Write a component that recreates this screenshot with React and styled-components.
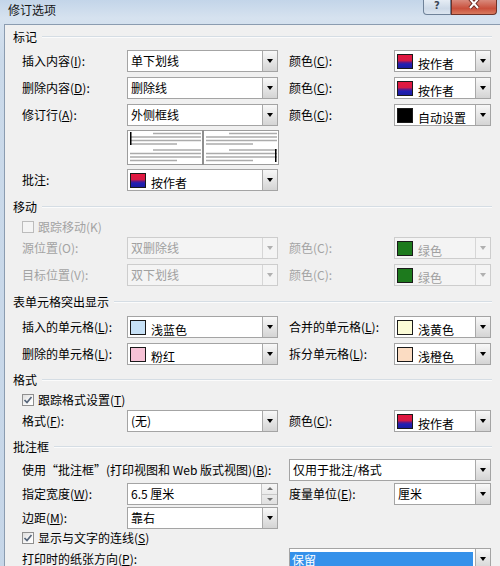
import React from "react";
import styled, { createGlobalStyle } from "styled-components";

const GlobalStyle = createGlobalStyle`
  html, body {
    margin: 0;
    padding: 0;
    width: 500px;
    height: 566px;
    overflow: hidden;
    background: #f0f0f0;
  }
  body {
    font-family: "Noto Sans CJK SC", "Noto Sans", sans-serif;
    font-size: 12px;
    color: #000;
  }
`;

const Window = styled.div`
  width: 506px;
  height: 600px;
  box-sizing: border-box;
  padding: 0 4px;
  display: flex;
  flex-direction: column;
  background: linear-gradient(180deg, #c3d5e9 0%, #d6e2ef 18px, #cbdaea 60px, #c6d6e8 100%);
`;

const TitleBar = styled.div`
  height: 24px;
  flex: none;
  display: flex;
  align-items: flex-start;
  padding: 0 5px 0 4px;
`;

const Title = styled.div`
  padding-top: 3px;
  line-height: 14px;
  color: #151515;
`;

const Controls = styled.div`
  margin-left: auto;
  display: flex;
`;

const CaptionButton = styled.div`
  width: ${(p) => p.$w}px;
  height: 15px;
  box-sizing: border-box;
  border: 1px solid ${(p) => (p.$close ? "#6e3228" : "#6f8299")};
  border-top: none;
  border-radius: ${(p) => (p.$close ? "0 0 4px 0" : "0 0 0 4px")};
  background: ${(p) =>
    p.$close
      ? "linear-gradient(180deg, #d98a7c 0%, #c9503c 60%, #d77a5e 100%)"
      : "linear-gradient(180deg, #e6edf5 0%, #cdd9e7 60%, #dbe5f0 100%)"};
  display: flex;
  justify-content: center;
  align-items: flex-start;
`;

const HelpGlyph = styled.span`
  font-family: "DejaVu Sans", sans-serif;
  font-size: 10px;
  font-weight: bold;
  line-height: 12px;
  color: #3a4656;
`;

const Client = styled.div`
  flex: 1;
  background: #f0f0f0;
  border: 1px solid #8b9cb0;
  padding: 3px 9px 0 8px;
  display: flex;
  flex-direction: column;
`;

const Header = styled.div`
  display: flex;
  align-items: center;
  gap: 5px;
  height: 18px;
  flex: none;
  line-height: 14px;
  margin-top: ${(p) => p.$mt ?? 0}px;
  &::after {
    content: "";
    flex: 1;
    height: 1px;
    background: #d5dde4;
    border-bottom: 1px solid #fbfbfb;
  }
`;

const Row = styled.div`
  display: grid;
  grid-template-columns: ${(p) => (p.$wide ? "267px 202px" : "105px 151px 116px 97px")};
  align-items: center;
  height: 22px;
  flex: none;
  padding-left: 9px;
  margin-top: ${(p) => p.$mt ?? 5}px;
`;

const Label = styled.span`
  white-space: nowrap;
  line-height: 14px;
  color: ${(p) => (p.$disabled ? "#a3a3a3" : "#000")};
  padding-left: ${(p) => (p.$right ? 11 : 0)}px;
`;

const CheckRow = styled.label`
  display: flex;
  align-items: center;
  gap: 4px;
  height: 18px;
  flex: none;
  padding-left: 9px;
  margin-top: ${(p) => p.$mt ?? 0}px;
  line-height: 14px;
  color: ${(p) => (p.$disabled ? "#a3a3a3" : "#000")};
`;

const CheckText = styled.span`
  white-space: nowrap;
`;

const Box = styled.span`
  width: 12px;
  height: 12px;
  box-sizing: border-box;
  border: 1px solid ${(p) => (p.$disabled ? "#bcbcbc" : "#8f8f8f")};
  background: ${(p) =>
    p.$disabled ? "#f4f4f4" : "linear-gradient(135deg, #dedede 0%, #f7f7f7 60%, #ffffff 100%)"};
  display: flex;
  align-items: center;
  justify-content: center;
`;

const Combo = styled.div`
  height: 22px;
  box-sizing: border-box;
  display: flex;
  border: 1px solid ${(p) => (p.$disabled ? "#cdcdcd" : "#a4a4a4")};
  background: ${(p) => (p.$disabled ? "#f4f4f4" : "#fff")};
  color: ${(p) => (p.$disabled ? "#a0a0a0" : "#000")};
  overflow: hidden;
`;

const Field = styled.div`
  flex: 1;
  display: flex;
  align-items: center;
  gap: 5px;
  padding-left: 3px;
  white-space: nowrap;
  line-height: 14px;
  overflow: hidden;
`;

const Selected = styled.div`
  flex: 1;
  margin: 3px 2px 0 0;
  padding-left: 2px;
  background: #3591ea;
  color: #fff;
  line-height: 16px;
`;

const Swatch = styled.span`
  width: 16px;
  height: 15px;
  flex: none;
  margin-left: -1px;
  box-sizing: border-box;
  border: 1px solid #1a1a1a;
  background: ${(p) => p.$fill};
`;

const ChipText = styled.span`
  margin-top: 6px;
`;

const DropButton = styled.div`
  width: 15px;
  flex: none;
  box-sizing: border-box;
  border-left: 1px solid ${(p) => (p.$disabled ? "#d6d6d6" : "#a9a9a9")};
  background: ${(p) =>
    p.$disabled ? "#f4f4f4" : "linear-gradient(180deg, #f8f8f8 0%, #e6e6e6 50%, #d4d4d4 100%)"};
  display: flex;
  align-items: center;
  justify-content: center;
  &::before {
    content: "";
    border-left: 3.5px solid transparent;
    border-right: 3.5px solid transparent;
    border-top: 4px solid ${(p) => (p.$disabled ? "#b0b0b0" : "#000")};
  }
`;

const Spin = styled.div`
  width: 15px;
  flex: none;
  display: flex;
  flex-direction: column;
  border-left: 1px solid #c4c4c4;
  background: linear-gradient(180deg, #f6f6f6, #e0e0e0);
`;

const SpinHalf = styled.div`
  flex: 1;
  display: flex;
  align-items: center;
  justify-content: center;
  border-top: ${(p) => (p.$down ? "1px solid #c8c8c8" : "none")};
  &::before {
    content: "";
    border-left: 3px solid transparent;
    border-right: 3px solid transparent;
    ${(p) => (p.$down ? "border-top: 3px solid #707070;" : "border-bottom: 3px solid #707070;")}
  }
`;

const PreviewRow = styled.div`
  height: 35px;
  flex: none;
  margin-top: 4px;
  padding-left: 114px;
`;

const BY_AUTHOR = "linear-gradient(180deg, #e5173e 0%, #d61a44 42%, #5a1a8a 58%, #2020b4 70%, #1c1ca0 100%)";

const colors = {
  author: BY_AUTHOR,
  black: "#000",
  green: "#1d7a1d",
  lightBlue: "#c7e1f6",
  pink: "#f6c2d6",
  lightYellow: "#fbfbd6",
  lightOrange: "#fbdcc2",
};

const Check = () => (
  <svg width="10" height="10" viewBox="0 0 10 10">
    <polyline points="1.5,5 4,7.5 8.5,2" fill="none" stroke="#56657a" strokeWidth="1.7" />
  </svg>
);

const Select = ({ text, disabled }) => (
  <Combo $disabled={disabled}>
    <Field>{text}</Field>
    <DropButton $disabled={disabled} />
  </Combo>
);

const ColorSelect = ({ fill, text, disabled }) => (
  <Combo $disabled={disabled}>
    <Field>
      <Swatch $fill={fill} />
      <ChipText>{text}</ChipText>
    </Field>
    <DropButton $disabled={disabled} />
  </Combo>
);

const paneLines = [
  [3.5, 26, 74],
  [7, 3, 74],
  [10.5, 3, 74],
  [14, 3, 50],
  [20, 26, 74],
  [23.5, 3, 74],
  [27, 3, 74],
  [30.5, 3, 50],
];

const Preview = () => (
  <svg width="152" height="35" viewBox="0 0 152 35">
    <rect x="0.5" y="0.5" width="151" height="34" fill="#fff" stroke="#9c9c9c" />
    <rect x="75" y="0" width="2" height="35" fill="#8f8f8f" />
    {[0, 76].map((dx) =>
      paneLines.map(([y, a, b], i) => (
        <line key={`${dx}-${i}`} x1={a + dx} x2={b + dx} y1={y} y2={y} stroke="#ababab" strokeWidth="1.6" />
      ))
    )}
    <rect x="3" y="2" width="1.5" height="13" fill="#000" />
    <rect x="148" y="19" width="1.5" height="13" fill="#000" />
  </svg>
);

export default function App() {
  return (
    <>
      <GlobalStyle />
      <Window>
        <TitleBar>
          <Title>修订选项</Title>
          <Controls>
            <CaptionButton $w={28}>
              <HelpGlyph>?</HelpGlyph>
            </CaptionButton>
            <CaptionButton $w={46} $close>
              <svg width="14" height="10" viewBox="0 0 14 10">
                <path d="M3 -1 L11 8 M11 -1 L3 8" stroke="#6b2a22" strokeWidth="4" />
                <path d="M3 -1 L11 8 M11 -1 L3 8" stroke="#fff" strokeWidth="2" />
              </svg>
            </CaptionButton>
          </Controls>
        </TitleBar>

        <Client>
          <Header>标记</Header>
          <Row $mt={4}>
            <Label>插入内容(<u>I</u>):</Label>
            <Select text="单下划线" />
            <Label $right>颜色(<u>C</u>):</Label>
            <ColorSelect fill={colors.author} text="按作者" />
          </Row>
          <Row>
            <Label>删除内容(<u>D</u>):</Label>
            <Select text="删除线" />
            <Label $right>颜色(<u>C</u>):</Label>
            <ColorSelect fill={colors.author} text="按作者" />
          </Row>
          <Row>
            <Label>修订行(<u>A</u>):</Label>
            <Select text="外侧框线" />
            <Label $right>颜色(<u>C</u>):</Label>
            <ColorSelect fill={colors.black} text="自动设置" />
          </Row>
          <PreviewRow>
            <Preview />
          </PreviewRow>
          <Row $mt={4}>
            <Label>批注:</Label>
            <ColorSelect fill={colors.author} text="按作者" />
          </Row>

          <Header $mt={7}>移动</Header>
          <CheckRow $mt={2} $disabled>
            <Box $disabled />
            <CheckText>跟踪移动(K)</CheckText>
          </CheckRow>
          <Row $mt={1}>
            <Label $disabled>源位置(O):</Label>
            <Select text="双删除线" disabled />
            <Label $right $disabled>颜色(C):</Label>
            <ColorSelect fill={colors.green} text="绿色" disabled />
          </Row>
          <Row>
            <Label $disabled>目标位置(V):</Label>
            <Select text="双下划线" disabled />
            <Label $right $disabled>颜色(C):</Label>
            <ColorSelect fill={colors.green} text="绿色" disabled />
          </Row>

          <Header $mt={7}>表单元格突出显示</Header>
          <Row>
            <Label>插入的单元格(<u>L</u>):</Label>
            <ColorSelect fill={colors.lightBlue} text="浅蓝色" />
            <Label $right>合并的单元格(<u>L</u>):</Label>
            <ColorSelect fill={colors.lightYellow} text="浅黄色" />
          </Row>
          <Row>
            <Label>删除的单元格(<u>L</u>):</Label>
            <ColorSelect fill={colors.pink} text="粉红" />
            <Label $right>拆分单元格(<u>L</u>):</Label>
            <ColorSelect fill={colors.lightOrange} text="浅橙色" />
          </Row>

          <Header $mt={6}>格式</Header>
          <CheckRow $mt={2}>
            <Box>
              <Check />
            </Box>
            <CheckText>
              跟踪格式设置(<u>T</u>)
            </CheckText>
          </CheckRow>
          <Row $mt={1}>
            <Label>格式(<u>F</u>):</Label>
            <Select text="(无)" />
            <Label $right>颜色(<u>C</u>):</Label>
            <ColorSelect fill={colors.author} text="按作者" />
          </Row>

          <Header $mt={6}>批注框</Header>
          <Row $wide $mt={3}>
            <Label>使用“批注框”(打印视图和 Web 版式视图)(<u>B</u>):</Label>
            <Select text="仅用于批注/格式" />
          </Row>
          <Row $mt={2}>
            <Label>指定宽度(<u>W</u>):</Label>
            <Combo>
              <Field>6.5 厘米</Field>
              <Spin>
                <SpinHalf />
                <SpinHalf $down />
              </Spin>
            </Combo>
            <Label $right>度量单位(<u>E</u>):</Label>
            <Select text="厘米" />
          </Row>
          <Row $mt={2}>
            <Label>边距(<u>M</u>):</Label>
            <Select text="靠右" />
          </Row>
          <CheckRow>
            <Box>
              <Check />
            </Box>
            <CheckText>
              显示与文字的连线(<u>S</u>)
            </CheckText>
          </CheckRow>
          <Row $wide $mt={1}>
            <Label>打印时的纸张方向(<u>P</u>):</Label>
            <Combo>
              <Selected>保留</Selected>
              <DropButton />
            </Combo>
          </Row>
        </Client>
      </Window>
    </>
  );
}
